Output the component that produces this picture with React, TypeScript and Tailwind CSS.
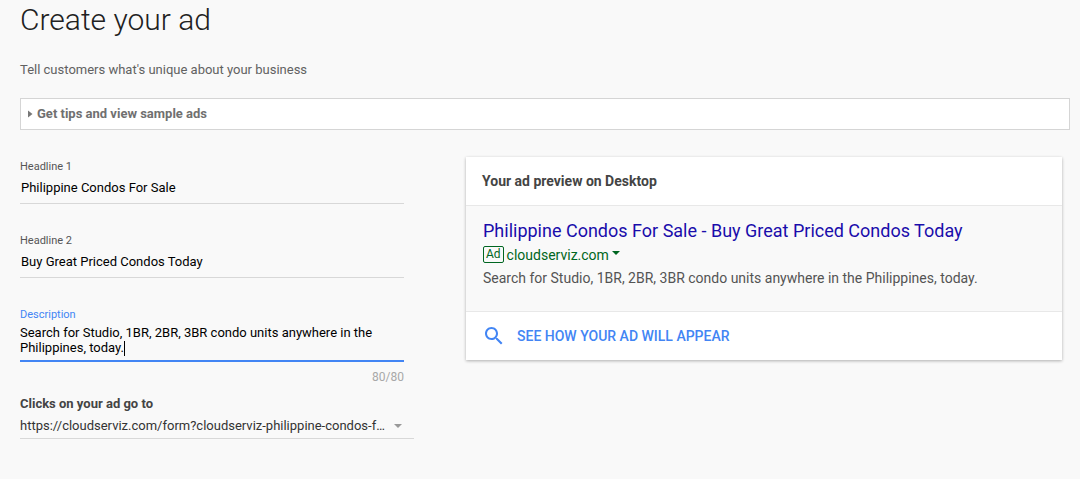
import { useEffect, useRef, useState } from 'react';

interface TextFieldProps {
  id: string;
  label: string;
  value: string;
  onChange: (value: string) => void;
}

function TextField({ id, label, value, onChange }: TextFieldProps) {
  return (
    <div className="flex h-[74px] flex-col">
      <label htmlFor={id} className="text-[11px] leading-4 text-[#555]">
        {label}
      </label>
      <input
        id={id}
        type="text"
        value={value}
        onChange={(e) => onChange(e.target.value)}
        className="h-[29px] border-b border-[#d8d8d8] bg-transparent px-px pb-1 text-[13px] text-black outline-none"
      />
    </div>
  );
}

const INITIAL_DESCRIPTION = 'Search for Studio, 1BR, 2BR, 3BR condo units anywhere in the Philippines, today.';

export default function App() {
  const [headline1, setHeadline1] = useState('Philippine Condos For Sale');
  const [headline2, setHeadline2] = useState('Buy Great Priced Condos Today');
  const [description, setDescription] = useState(INITIAL_DESCRIPTION);
  const [editing, setEditing] = useState(false);
  const descriptionRef = useRef<HTMLTextAreaElement>(null);

  // Start with the cursor at the end of the description
  useEffect(() => {
    const field = descriptionRef.current;
    if (!field) return;
    field.focus();
    field.setSelectionRange(field.value.length, field.value.length);
  }, []);

  return (
    <main className="min-h-screen bg-[#f9f9f9] pr-[10px] pb-8 pl-5 font-[Roboto,sans-serif] text-[#212121]">
      <h1 className="pt-0.5 text-[30px] leading-9 font-light">Create your ad</h1>
      <p className="mt-6 text-[13px] leading-4 text-[#616161]">Tell customers what's unique about your business</p>

      <button
        type="button"
        className="mt-5 flex h-8 w-full items-center gap-1 border border-[#d5d5d5] bg-white px-[7px] text-[13px] font-bold text-[#707070]"
      >
        <svg className="h-2 w-[5px]" viewBox="0 0 5 8" fill="#777">
          <path d="M0 .5l4.5 3.5L0 7.5z" />
        </svg>
        Get tips and view sample ads
      </button>

      <div className="mt-[27px] flex items-start pr-2">
        {/* Ad form */}
        <form className="w-[394px] shrink-0 pt-0.5">
          <div className="w-[384px]">
            <TextField id="headline1" label="Headline 1" value={headline1} onChange={setHeadline1} />
            <TextField id="headline2" label="Headline 2" value={headline2} onChange={setHeadline2} />
            <div className="relative flex flex-col">
              <label htmlFor="description" className="text-[11px] leading-4 text-[#4285f4]">
                Description
              </label>
              <textarea
                id="description"
                ref={descriptionRef}
                rows={2}
                value={description}
                onChange={(e) => setDescription(e.target.value)}
                onKeyDown={() => setEditing(true)}
                onMouseDown={() => setEditing(true)}
                className="mt-0.5 h-[37px] resize-none overflow-hidden border-b-2 border-[#4285f4] bg-transparent text-[13px] leading-[15px] text-black outline-none"
              />
              {/* Resting cursor, until the user takes over */}
              {!editing && (
                <span className="pointer-events-none absolute top-[34px] left-[104px] h-[15px] w-px bg-black" />
              )}
              <span className="mt-[7px] text-right text-xs leading-4 text-[#a8a8a8]">{description.length}/80</span>
            </div>
          </div>

          <label htmlFor="finalUrl" className="mt-[11px] block text-[13px] leading-4 font-bold text-[#444]">
            Clicks on your ad go to
          </label>
          <div className="relative border-b border-[#d8d8d8]">
            <select
              id="finalUrl"
              className="block h-[26px] w-full appearance-none bg-transparent pt-0.5 pr-7 text-[13px] text-[#333] outline-none"
            >
              <option>https://cloudserviz.com/form?cloudserviz-philippine-condos-f…</option>
            </select>
            <svg className="pointer-events-none absolute top-3 right-3 h-1 w-2" viewBox="0 0 8 4" fill="#999">
              <path d="M0 0h8L4 4z" />
            </svg>
          </div>
        </form>

        {/* Ad preview */}
        <section className="ml-[52px] min-w-0 flex-1 bg-white shadow-[0_1px_3px_rgba(0,0,0,0.3)]">
          <h2 className="border-b border-[#e8e8e8] p-4 text-sm leading-4 font-bold text-[#444]">
            Your ad preview on Desktop
          </h2>
          <div className="border-b border-[#e8e8e8] bg-[#f9f9f9] px-[17px] pt-[13px] pb-[21px]">
            <a href="#preview" className="block text-lg leading-6 text-[#1a0dab]">
              {headline1} - {headline2}
            </a>
            <div className="flex h-[23px] items-center text-sm text-[#006621]">
              <span className="mr-[3px] rounded-[2px] border border-[#006621] px-0.5 text-xs leading-[15px]">Ad</span>
              cloudserviz.com
              <svg className="mb-1 ml-[3px] h-1 w-2" viewBox="0 0 8 4" fill="#006621">
                <path d="M0 0h8L4 4z" />
              </svg>
            </div>
            <p className="text-sm leading-6 text-[#545454]">{description}</p>
          </div>
          <button
            type="button"
            className="flex h-12 items-center gap-[11px] px-4 pb-px text-sm font-medium text-[#4285f4]"
          >
            <svg className="h-6 w-6" viewBox="0 0 24 24" fill="#4285f4">
              <path d="M15.5 14h-.79l-.28-.27C15.41 12.59 16 11.11 16 9.5 16 5.91 13.09 3 9.5 3S3 5.91 3 9.5 5.91 16 9.5 16c1.61 0 3.09-.59 4.23-1.57l.27.28v.79l5 4.99L20.49 19l-4.99-5zm-6 0C7.01 14 5 11.99 5 9.5S7.01 5 9.5 5 14 7.01 14 9.5 11.99 14 9.5 14z" />
            </svg>
            SEE HOW YOUR AD WILL APPEAR
          </button>
        </section>
      </div>
    </main>
  );
}
